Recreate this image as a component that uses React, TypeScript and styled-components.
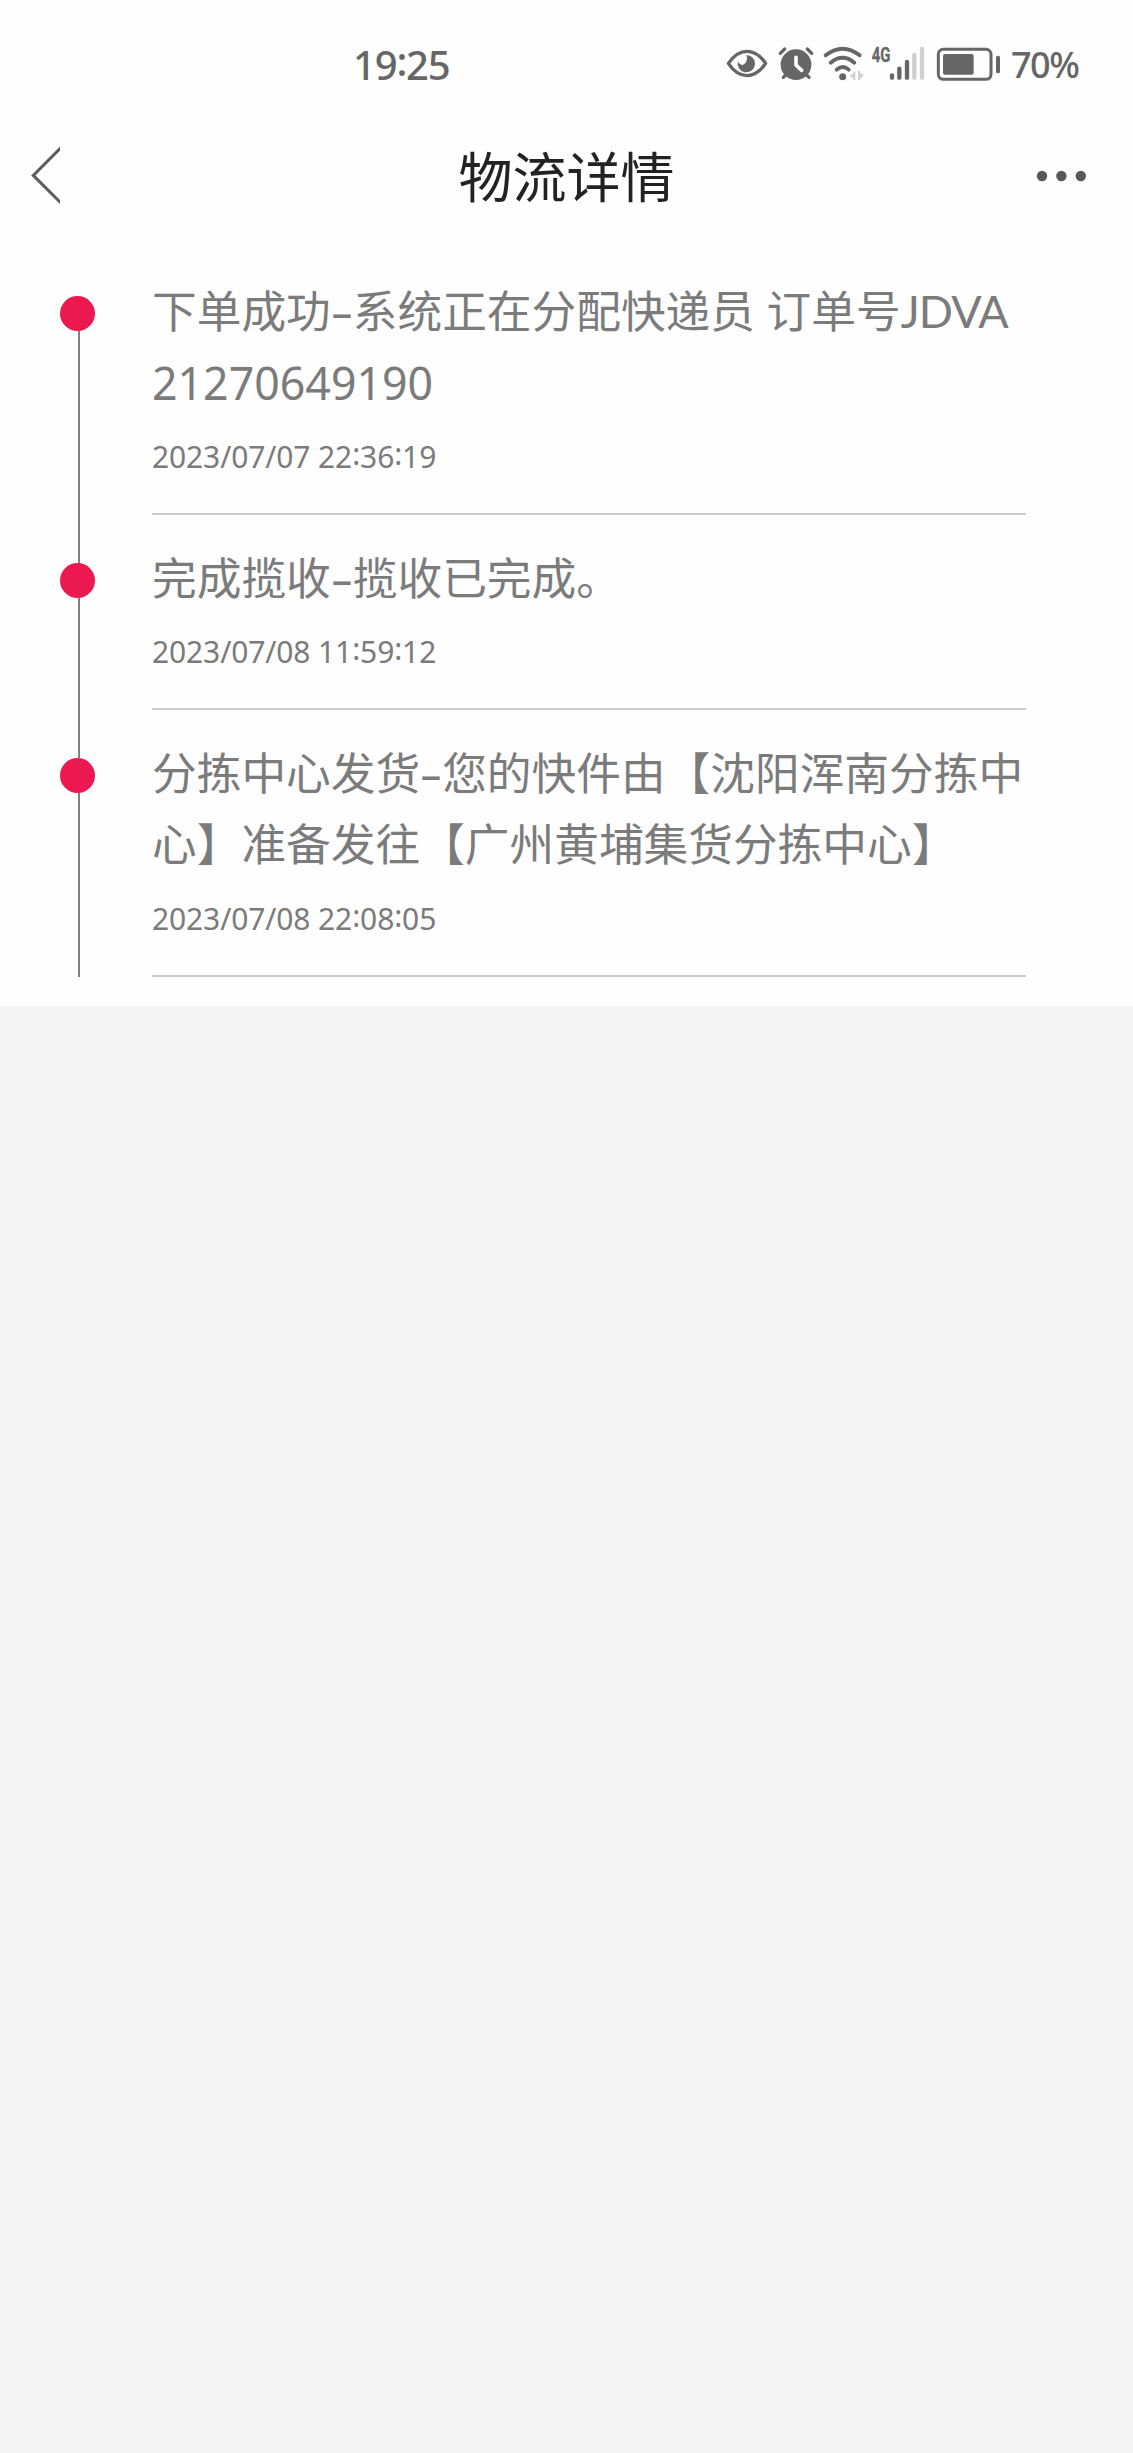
import React from "react";
import styled, { createGlobalStyle } from "styled-components";

const GlobalStyle = createGlobalStyle`
  body {
    margin: 0;
    background: #f5f5f5;
    font-family: "Noto Sans", "Noto Sans CJK SC", sans-serif;
  }
`;

const Page = styled.div`
  width: 1133px;
  min-height: 2453px;
  background: #f5f5f5;
`;

const StatusBar = styled.header`
  display: flex;
  align-items: center;
  height: 126px;
  padding-left: 353px;
  box-sizing: border-box;
  background: #fefefe;
  color: #666;
`;

const Clock = styled.time`
  width: 373px;
  padding-top: 3px;
  font-size: 40px;
  font-weight: 500;
  line-height: 54px;
  letter-spacing: -1.2px;
  white-space: nowrap;
`;

const StatusIcon = styled.svg<{ $gap: number }>`
  flex: none;
  display: block;
  height: 36px;
  margin-right: ${(p) => p.$gap}px;
  overflow: visible;
`;

const BatteryLevel = styled.span`
  font-size: 36px;
  font-weight: 500;
  line-height: 50px;
  padding-top: 4px;
  letter-spacing: -1.5px;
`;

const NavBar = styled.nav`
  display: grid;
  grid-template-columns: 160px 1fr 160px;
  align-items: center;
  height: 100px;
  background: #fefefe;
`;

const NavButton = styled.button<{ $end?: boolean }>`
  display: flex;
  justify-content: ${(p) => (p.$end ? "flex-end" : "flex-start")};
  padding: ${(p) => (p.$end ? "0 46px 0 0" : "0 0 0 30px")};
  border: 0;
  background: none;
`;

const Title = styled.h1`
  margin: 0;
  padding-bottom: 2px;
  text-align: center;
  font-family: "Noto Sans CJK SC", sans-serif;
  font-size: 54px;
  font-weight: 400;
  line-height: 80px;
  color: #222;
`;

const Timeline = styled.ol`
  margin: 0;
  padding: 22px 0 29px;
  list-style: none;
  background: #fefefe;
`;

const Entry = styled.li<{ $height: number }>`
  display: flex;
  height: ${(p) => p.$height}px;
`;

const Rail = styled.div`
  display: flex;
  flex-direction: column;
  flex: none;
  width: 92px;
  padding-left: 60px;
`;

const Segment = styled.div<{ $lead?: boolean; $hidden?: boolean }>`
  width: 2px;
  margin-left: 18px;
  flex: ${(p) => (p.$lead ? "0 0 48px" : "1")};
  background: ${(p) => (p.$hidden ? "transparent" : "#808080")};
`;

const Dot = styled.div`
  flex: none;
  width: 35px;
  height: 35px;
  border-radius: 50%;
  background: #ec1850;
`;

const Body = styled.div`
  display: flex;
  flex-direction: column;
  justify-content: space-between;
  width: 874px;
  box-sizing: border-box;
  padding: 27px 0 34px;
  border-bottom: 2px solid #ccc;
  color: #7b7b7b;
`;

const Message = styled.p`
  margin: 0;
  font-size: 44.7px;
  line-height: 71px;
  white-space: nowrap;
`;

const Latin = styled.span`
  font-family: Lato, sans-serif;
  font-size: 45px;
  letter-spacing: -0.9px;
`;

const Dash = styled.span`
  display: inline-block;
  width: 22px;
  text-align: center;
  transform: scaleX(1.6);
`;

const Stamp = styled.time`
  font-size: 30px;
  line-height: 45px;
  letter-spacing: -0.12px;
`;

const Colon = styled.span<{ $lift: number }>`
  display: inline-block;
  transform: translateY(-${(p) => p.$lift}px);
`;

const withColons = (value: string, lift: number) =>
  value.split(":").map((part, i) => (
    <React.Fragment key={i}>
      {i > 0 && <Colon $lift={lift}>:</Colon>}
      {part}
    </React.Fragment>
  ));

const ink = "#666";
const faint = "#d0d0d0";

const EyeIcon = () => (
  <StatusIcon $gap={9} width="42" viewBox="78 45 126 108">
    <path d="M85 100 Q110 64 141 64 Q172 64 197 100 Q172 137 141 137 Q110 137 85 100Z" fill="none" stroke={ink} strokeWidth="10" strokeLinejoin="round" />
    <path d="M139 75 A26 26 0 1 1 114 94 C118 104 126 107 132 103 C141 98 143 84 139 75Z" fill={ink} />
  </StatusIcon>
);

const AlarmIcon = () => (
  <StatusIcon $gap={7} width="38" viewBox="231 45 114 108">
    <circle cx="288" cy="104" r="46" fill={ink} />
    <path d="M241 70 L254 57 M322 57 L335 70" stroke={ink} strokeWidth="10" strokeLinecap="round" />
    <path d="M250 142 L262 130 M314 130 L327 142" stroke={ink} strokeWidth="10" strokeLinecap="round" />
    <path d="M288 82 V105 L305 121" fill="none" stroke="#fefefe" strokeWidth="11" strokeLinecap="round" strokeLinejoin="round" />
  </StatusIcon>
);

const WifiIcon = () => (
  <StatusIcon $gap={6} width="42" viewBox="366 45 126 108">
    <g fill="none" stroke={ink} strokeWidth="11.5" strokeLinecap="round">
      <path d="M377 76 Q428 36 479 76" />
      <path d="M392 98 Q428 69 463 98" />
      <path d="M410 119 Q428 103 446 119" />
    </g>
    <circle cx="428" cy="140" r="10.5" fill={ink} />
    <path d="M466 123 V150 H459 V142 H450 V137Z M474 123 H480 V131 L490 132 V137 L478 150 H474Z" fill={faint} />
  </StatusIcon>
);

const SignalIcon = () => (
  <StatusIcon $gap={10} width="55" viewBox="510 45 165 108">
    <text x="515" y="96" fill={ink} stroke={ink} strokeWidth="1" fontFamily="Roboto, sans-serif" fontWeight="700" fontSize="61" textLength="56" lengthAdjust="spacingAndGlyphs">4G</text>
    <g strokeWidth="13" strokeLinecap="round">
      <path d="M576 136 V143 M598 116 V143 M621 96 V143" stroke={ink} />
      <path d="M643 75 V143 M666 57 V143" stroke={faint} />
    </g>
  </StatusIcon>
);

const BatteryIcon = () => (
  <StatusIcon $gap={10} width="66" viewBox="705 45 198 108">
    <rect x="715" y="58" width="158" height="90" rx="15" fill="none" stroke={ink} strokeWidth="9" />
    <rect x="729" y="72" width="92" height="62" rx="6" fill={ink} />
    <rect x="888" y="77" width="12" height="53" rx="5" fill={ink} />
  </StatusIcon>
);

const BackIcon = () => (
  <svg width="30" height="58" viewBox="30 147 30 58">
    <path d="M61 147.6 L33.3 175.4 L61 203" fill="none" stroke="#5c5c5c" strokeWidth="3" />
  </svg>
);

const MoreIcon = () => (
  <svg width="52" height="12" viewBox="0 0 52 12" fill="#585858">
    <circle cx="7" cy="6" r="5.2" />
    <circle cx="26.4" cy="6" r="5.2" />
    <circle cx="45.8" cy="6" r="5.2" />
  </svg>
);

const entries = [
  {
    height: 267,
    time: "2023/07/07 22:36:19",
    message: (
      <>
        下单成功<Dash>-</Dash>系统正在分配快递员 订单号<Latin>JDVA</Latin>
        <br />
        21270649190
      </>
    ),
  },
  {
    height: 195,
    time: "2023/07/08 11:59:12",
    message: (
      <>
        完成揽收<Dash>-</Dash>揽收已完成。
      </>
    ),
  },
  {
    height: 267,
    time: "2023/07/08 22:08:05",
    message: (
      <>
        分拣中心发货<Dash>-</Dash>您的快件由【沈阳浑南分拣中
        <br />
        心】准备发往【广州黄埔集货分拣中心】
      </>
    ),
  },
];

export default function App() {
  return (
    <Page lang="zh-CN">
      <GlobalStyle />
      <StatusBar>
        <Clock>{withColons("19:25", 4)}</Clock>
        <EyeIcon />
        <AlarmIcon />
        <WifiIcon />
        <SignalIcon />
        <BatteryIcon />
        <BatteryLevel>70%</BatteryLevel>
      </StatusBar>
      <NavBar>
        <NavButton aria-label="返回">
          <BackIcon />
        </NavButton>
        <Title>物流详情</Title>
        <NavButton $end aria-label="更多">
          <MoreIcon />
        </NavButton>
      </NavBar>
      <Timeline>
        {entries.map((entry, i) => (
          <Entry key={entry.time} $height={entry.height}>
            <Rail>
              <Segment $lead $hidden={i === 0} />
              <Dot />
              <Segment />
            </Rail>
            <Body>
              <Message>{entry.message}</Message>
              <Stamp>{withColons(entry.time, 3)}</Stamp>
            </Body>
          </Entry>
        ))}
      </Timeline>
    </Page>
  );
}
